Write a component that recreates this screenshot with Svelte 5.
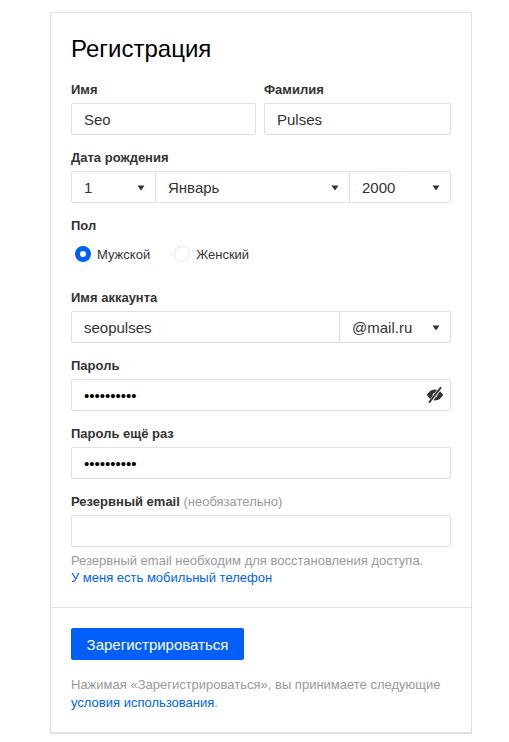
<script lang="ts">
  let gender = $state('m');
  let showPassword = $state(false);
  let password = $state('qwerty1234');
</script>

{#snippet arrow()}
  <svg class="arrow" width="8" height="6" viewBox="0 0 8 6"><path d="M0.5 0.5h7L4 5.5z" fill="#333" /></svg>
{/snippet}

<div class="page">
  <form class="card" onsubmit={(e) => e.preventDefault()}>
    <div class="top">
      <h1>Регистрация</h1>

      <div class="names">
        <label class="field">
          <span class="label">Имя</span>
          <input type="text" value="Seo" />
        </label>
        <label class="field">
          <span class="label">Фамилия</span>
          <input type="text" value="Pulses" />
        </label>
      </div>

      <div class="field">
        <span class="label">Дата рождения</span>
        <div class="group">
          <div class="sel day"><span>1</span>{@render arrow()}</div>
          <div class="sel month"><span>Январь</span>{@render arrow()}</div>
          <div class="sel year"><span>2000</span>{@render arrow()}</div>
        </div>
      </div>

      <div class="field">
        <span class="label">Пол</span>
        <div class="radios">
          <button type="button" class="radio" class:on={gender === 'm'} onclick={() => (gender = 'm')}>
            <span class="dot"></span>Мужской
          </button>
          <button type="button" class="radio" class:on={gender === 'f'} onclick={() => (gender = 'f')}>
            <span class="dot"></span>Женский
          </button>
        </div>
      </div>

      <div class="field">
        <span class="label">Имя аккаунта</span>
        <div class="group">
          <input class="account" type="text" value="seopulses" />
          <div class="sel domain"><span>@mail.ru</span>{@render arrow()}</div>
        </div>
      </div>

      <div class="field">
        <span class="label">Пароль</span>
        <div class="password">
          <input type={showPassword ? 'text' : 'password'} bind:value={password} />
          <button type="button" class="eye" aria-label="Показать пароль" onclick={() => (showPassword = !showPassword)}>
            <svg width="16" height="16" viewBox="0 0 16 16">
              <path fill-rule="evenodd" fill="#333" d="M8 2.500c3.800 0 6.800 3 8 5.500-1.200 2.500-4.200 5.500-8 5.500S1.200 10.500 0 8C1.200 5.500 4.200 2.500 8 2.500zm0 3.200C6.700 5.700 5.700 6.700 5.700 8s1 2.300 2.300 2.300 2.300-1 2.300-2.300S9.300 5.700 8 5.700z" />
              <path d="M3 15L13.500 1" stroke="#fff" stroke-width="3.200" />
              <path d="M2.500 15L13.500 1" stroke="#333" stroke-width="2" stroke-linecap="round" />
            </svg>
          </button>
        </div>
      </div>

      <label class="field">
        <span class="label">Пароль ещё раз</span>
        <input type="password" value="qwerty1234" />
      </label>

      <label class="field last">
        <span class="label">Резервный email <em>(необязательно)</em></span>
        <input type="text" />
      </label>

      <p class="hint">Резервный email необходим для восстановления доступа.</p>
      <a class="link" href="#phone">У меня есть мобильный телефон</a>
    </div>

    <div class="bottom">
      <button type="submit" class="submit">Зарегистрироваться</button>
      <p class="terms">Нажимая «Зарегистрироваться», вы принимаете следующие<br /><a href="#terms">условия использования</a>.</p>
    </div>
  </form>
</div>

<style>
  :global(body) {
    margin: 0;
    background: #fff;
    font-family: "Liberation Sans", Arial, sans-serif;
  }

  .page {
    padding: 12px 37px 9px 50px;
  }

  .card {
    box-sizing: border-box;
    width: 422px;
    border: 1px solid #e0e0e0;
    border-bottom-width: 2px;
    background: #fff;
  }

  .top {
    padding: 21px 20px 21px;
    border-bottom: 1px solid #e0e0e0;
  }

  h1 {
    margin: 0 0 17px;
    font-size: 24px;
    font-weight: 400;
    line-height: 30px;
    color: #000;
  }

  .field {
    display: block;
    margin-bottom: 14px;
  }

  .field.last {
    margin-bottom: 5px;
  }

  .label {
    display: block;
    height: 22px;
    font-size: 13px;
    font-weight: 700;
    line-height: 18px;
    color: #333;
  }

  .label em {
    font-style: normal;
    font-weight: 400;
    color: #999;
  }

  .names {
    display: grid;
    grid-template-columns: 185px 187px;
    gap: 8px;
  }

  input {
    box-sizing: border-box;
    display: block;
    width: 100%;
    height: 32px;
    padding: 0 12px;
    border: 1px solid #e0e0e0;
    border-radius: 2px;
    outline: none;
    background: #fff;
    font-family: inherit;
    font-size: 15px;
    color: #333;
  }

  input[type="password"] {
    color: #000;
  }

  .group {
    display: flex;
    height: 32px;
    box-sizing: border-box;
    border: 1px solid #e0e0e0;
    border-radius: 2px;
  }

  .sel {
    box-sizing: border-box;
    display: flex;
    align-items: center;
    justify-content: space-between;
    padding: 0 10px 0 12px;
    border-left: 1px solid #e0e0e0;
    font-size: 15px;
    color: #333;
  }

  .arrow {
    display: block;
    margin-top: 1px;
  }

  .day {
    width: 83px;
    border-left: none;
  }

  .month {
    width: 194px;
  }

  .year {
    flex: 1;
  }

  .account {
    flex: 1;
    height: 30px;
    border: none;
    border-radius: 0;
  }

  .domain {
    width: 111px;
  }

  .radios {
    display: flex;
    gap: 24px;
    height: 20px;
    margin: 5px 0 25px 4px;
  }

  .radio {
    display: flex;
    align-items: center;
    gap: 6px;
    padding: 0;
    border: none;
    background: none;
    cursor: pointer;
    font-family: inherit;
    font-size: 13px;
    color: #333;
  }

  .dot {
    box-sizing: border-box;
    width: 16px;
    height: 16px;
    border: 1px solid #e8e8e8;
    border-radius: 50%;
    background: #fff;
  }

  .radio.on .dot {
    border: 5.500px solid #005ff9;
  }

  .password {
    position: relative;
  }

  .eye {
    position: absolute;
    top: 8px;
    right: 8px;
    display: flex;
    padding: 0;
    border: none;
    background: none;
    cursor: pointer;
  }

  .hint {
    margin: 0;
    font-size: 13px;
    line-height: 17px;
    color: #999;
  }

  .link {
    display: block;
    font-size: 13px;
    line-height: 17px;
    text-decoration: none;
    color: #005ff9;
  }

  .bottom {
    padding: 20px 20px 20px;
  }

  .submit {
    display: block;
    height: 32px;
    width: 173px;
    padding: 0;
    border: none;
    border-radius: 2px;
    background: #005ff9;
    cursor: pointer;
    font-family: inherit;
    font-size: 15px;
    color: #fff;
  }

  .terms {
    margin: 16px 0 0;
    font-size: 13px;
    line-height: 18px;
    color: #999;
  }

  .terms a {
    text-decoration: none;
    color: #005ff9;
  }
</style>
